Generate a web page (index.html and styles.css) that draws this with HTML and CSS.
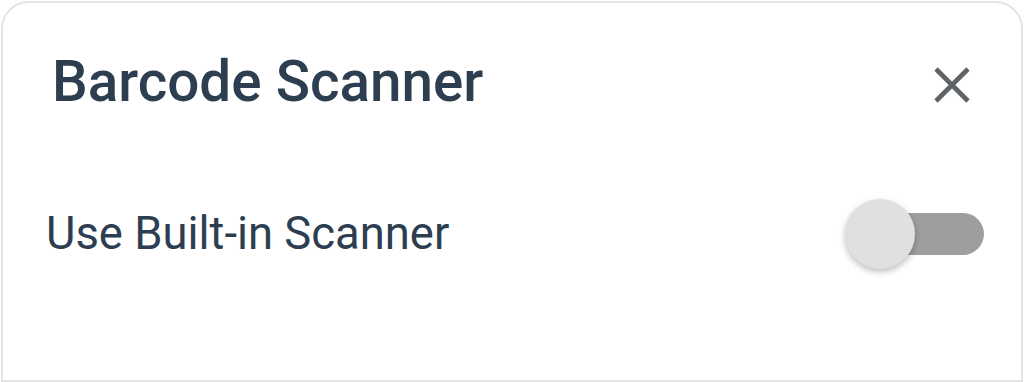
FILE: index.html
```html
<!DOCTYPE html>
<html>
<head>
<meta charset="utf-8">
<link rel="stylesheet" href="styles.css">
</head>
<body>
<div class="card">
  <div class="header">
    <h1 class="title">Barcode Scanner</h1>
    <button class="close" aria-label="Close">
      <svg width="40" height="40" viewBox="0 0 40 40"><path d="M4 4 L36 36 M36 4 L4 36" stroke="#5f6368" stroke-width="4.6" stroke-linecap="butt" fill="none"/></svg>
    </button>
  </div>
  <div class="row">
    <span class="label">Use Built-in Scanner</span>
    <div class="switch">
      <div class="track"></div>
      <div class="thumb"></div>
    </div>
  </div>
</div>
</body>
</html>
```
FILE: styles.css
```css
html, body { margin: 0; padding: 0; background: #ffffff; }
body { width: 1024px; height: 382px; overflow: hidden; font-family: Roboto, "Noto Sans", sans-serif; }
.card {
  box-sizing: border-box;
  margin: 1px 1px 0 1px;
  width: 1022px;
  height: 381px;
  border: 2px solid #e4e4e4;
  border-radius: 28px 28px 0 0;
  background: #fff;
  padding: 0 37px 0 44px;
}
.header {
  display: flex;
  align-items: center;
  justify-content: space-between;
  height: 158px;
}
.title {
  margin: 0 0 0 5px;
  font-size: 56.6px;
  font-weight: 500;
  color: #2c3e50;
  line-height: 1;
  position: relative;
  top: 0;
}
.close {
  border: 0; background: none; padding: 0; margin: 6px 12px 0 0;
  width: 40px; height: 40px; display: flex; align-items: center; justify-content: center;
}
.row {
  display: flex;
  align-items: center;
  justify-content: space-between;
  height: 146px;
}
.label {
  font-size: 45.4px;
  line-height: 1;
  color: #2c3e50;
  margin-left: -1px;
}
.switch {
  width: 139px;
  height: 70px;
  display: flex;
  align-items: center;
  position: relative;
}
.track {
  margin-left: 4px;
  width: 135px;
  height: 42px;
  border-radius: 21px;
  background: #9e9e9e;
}
.thumb {
  position: absolute;
  left: 0;
  top: 0;
  width: 70px;
  height: 70px;
  border-radius: 50%;
  background: #e1e0e1;
  box-shadow: 0 3px 6px rgba(0,0,0,0.25);
}
```
